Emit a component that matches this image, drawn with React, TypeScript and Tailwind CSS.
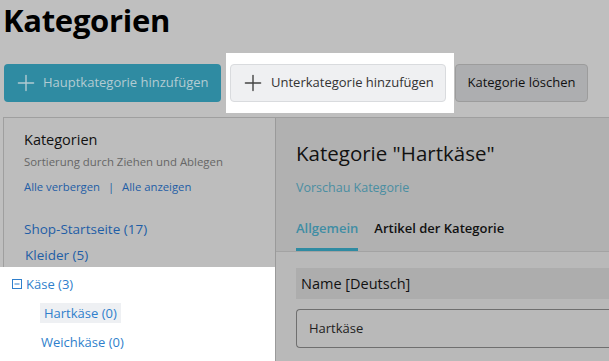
import { Plus } from 'lucide-react';

const font = { fontFamily: '"Open Sans", "Noto Sans", sans-serif' };

export default function App() {
  return (
    <div className="w-[609px] h-[361px] overflow-hidden bg-[#bfbfbf] text-[#111]" style={font}>
      <h1 className="pl-[3px] h-[53px] text-[31px] leading-[40px] font-bold text-black tracking-[-0.3px]">Kategorien</h1>

      {/* toolbar */}
      <div className="flex items-center h-[60px] pl-[4px]">
        <button className="flex items-center gap-[4px] h-[38px] w-[217px] pl-[9px] rounded-[4px] bg-[#2f8ba2] text-[#b3cbd2] text-[13px]">
          <Plus size={26} strokeWidth={1.3} />
          Hauptkategorie hinzufügen
        </button>
        <div className="ml-[5px] h-[60px] flex items-center pl-[4px] pr-[8px] bg-white">
          <button className="flex items-center gap-[5px] h-[38px] w-[216px] pl-[9px] rounded-[4px] border border-[#d9dbde] bg-[#eff0f2] text-[#333] text-[13px]">
            <Plus size={26} strokeWidth={1.3} className="text-[#444]" />
            Unterkategorie hinzufügen
          </button>
        </div>
        <button className="ml-[1px] h-[38px] w-[133px] rounded-[4px] border border-[#9c9c9c] bg-[#adaeb0] text-[#111] text-[13px]">
          Kategorie löschen
        </button>
      </div>

      {/* panels */}
      <div className="mt-[4px] ml-[3px] flex h-[250px] border-t border-l border-[#9f9f9f]">
        {/* tree */}
        <div className="w-[271px] shrink-0 flex flex-col bg-[#bdbdbd]">
          <div className="pl-[20px] pt-[12px]">
            <p className="text-[14.5px] leading-[20px] text-[#111]">Kategorien</p>
            <p className="mt-[4px] text-[11.4px] leading-[16px] text-[#666]">Sortierung durch Ziehen und Ablegen</p>
            <p className="mt-[9px] text-[11.3px] leading-[16px] text-[#1f5ea6]">
              Alle verbergen <span className="mx-[5px]">|</span> Alle anzeigen
            </p>
          </div>
          <div className="mt-[24px] pl-[20px] flex flex-col gap-[6px] text-[13.5px] leading-[20px] text-[#1f5ea6]">
            <span>Shop-Startseite (17)</span>
            <span className="pl-[1px]">Kleider (5)</span>
          </div>
          <div className="mt-[2px] -ml-[4px] w-[278px] flex-1 bg-white pt-[7px] text-[13px] leading-[20px] text-[#2f7fcc]">
            <div className="flex items-center pl-[12px]">
              <svg width="10" height="10" viewBox="0 0 10 10" className="mr-[4px]">
                <rect x="0.5" y="0.5" width="9" height="9" fill="none" stroke="#2f7fcc" />
                <line x1="2.5" y1="5" x2="7.5" y2="5" stroke="#2f7fcc" />
              </svg>
              <span>Käse (3)</span>
            </div>
            <div className="mt-[9px] ml-[40px] w-fit px-[4px] bg-[#eef0f3]">Hartkäse (0)</div>
            <div className="mt-[9px] ml-[41px]">Weichkäse (0)</div>
          </div>
        </div>

        {/* detail */}
        <div className="flex-1 flex flex-col border-l border-[#9a9a9a] bg-[#b9b9b9]">
          <div className="bg-[#b1b1b1] pl-[20px] pt-[20px] border-b border-[#a3a3a3]">
            <h2 className="text-[20.5px] leading-[30px] text-[#111]">Kategorie "Hartkäse"</h2>
            <p className="mt-[11px] text-[12.5px] leading-[18px] text-[#4a8ea2]">Vorschau Kategorie</p>
            <div className="mt-[21px] flex gap-[16px] text-[13px] font-semibold leading-[20px]">
              <span className="pb-[10px] border-b-[3px] border-[#2f8ba2] text-[#3f8da4]">Allgemein</span>
              <span className="text-[#111]">Artikel der Kategorie</span>
            </div>
          </div>
          <div className="pl-[20px] pt-[16px]">
            <div className="h-[31px] flex items-center pl-[5px] bg-[#adadad] text-[14.5px] text-[#111]">Name [Deutsch]</div>
            <div className="mt-[10px] h-[39px] flex items-center pl-[12px] rounded-l-[4px] border border-r-0 border-[#6f6f6f] text-[13px] text-[#222]">
              Hartkäse
            </div>
          </div>
        </div>
      </div>
    </div>
  );
}
